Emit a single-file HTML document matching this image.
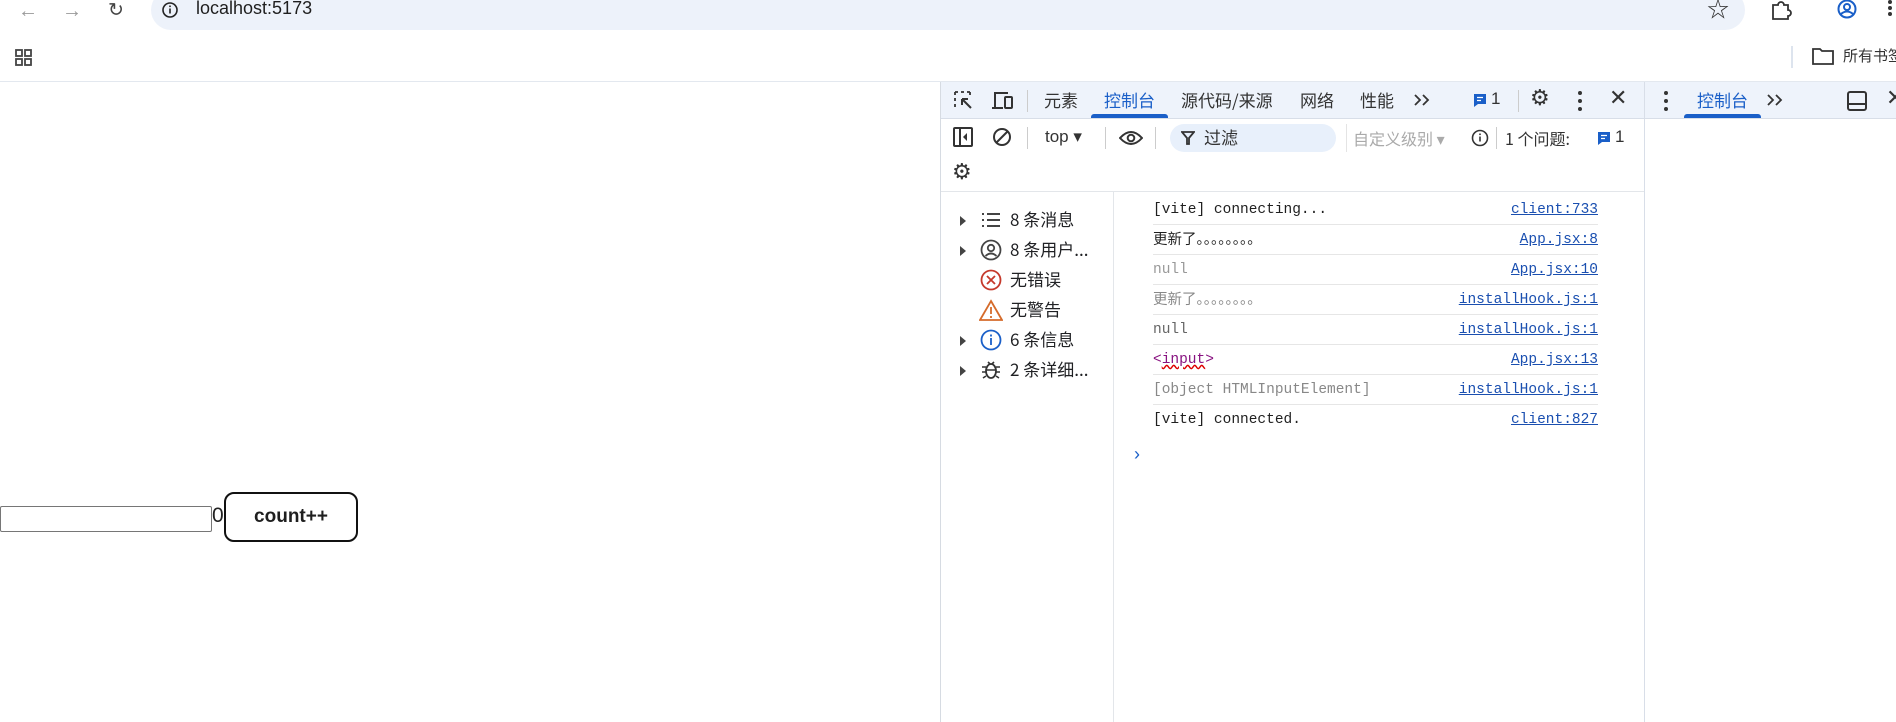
<!DOCTYPE html>
<html><head><meta charset="utf-8"><style>
*{margin:0;padding:0;box-sizing:border-box}
body{width:1896px;height:722px;position:relative;overflow:hidden;background:#fff;font-family:"Liberation Sans","Noto Sans CJK SC",sans-serif;color:#1f1f1f;line-height:1.15}
.a{position:absolute;white-space:nowrap}
.cj{font-family:"Noto Sans CJK SC","Liberation Sans",sans-serif;line-height:22px}
.mono{font-family:"Liberation Mono","Noto Sans CJK SC",monospace;font-size:14.5px;line-height:18px}
.row{position:absolute;left:1153px;width:445px;height:30px;border-bottom:1px solid #e6e6e6}
.lnk{position:absolute;right:0;top:6px;color:#1a4fb0;text-decoration:underline;line-height:18px}
.txt{position:absolute;left:0;top:6px;line-height:18px;height:18px;overflow:visible}
.sb{position:absolute;left:960px;font-size:17px;color:#202124}
.tri{position:absolute;left:0;top:6px;width:0;height:0;border-left:6px solid #444;border-top:5px solid transparent;border-bottom:5px solid transparent}
</style></head><body>
<div class="a" style="left:0;top:0;width:1896px;height:40px;background:#fff"></div>
<div class="a" style="left:151px;top:-10px;width:1594px;height:40px;background:#edf2fa;border-radius:20px"></div>
<div class="a" style="left:18px;top:0;color:#999;font-size:20px">←</div>
<div class="a" style="left:62px;top:0;color:#999;font-size:20px">→</div>
<div class="a" style="left:108px;top:0;color:#444;font-size:19px">↻</div>
<svg class="a" style="left:161px;top:1px" width="18" height="18"><circle cx="9" cy="9" r="7" fill="none" stroke="#222" stroke-width="1.6"/><rect x="8.2" y="7.5" width="1.6" height="5" fill="#222"/><rect x="8.2" y="4.5" width="1.6" height="1.6" fill="#222"/></svg>
<div class="a" style="left:196px;top:-2px;font-size:18px;color:#1f1f1f">localhost:5173</div>
<div class="a" style="left:1707px;top:-3px;font-size:22px;color:#333">☆</div>
<svg class="a" style="left:1770px;top:0" width="22" height="20"><path d="M3 5h5a3 3 0 0 1 6 0h4v5a3 3 0 0 1 0 6v3H3z" fill="none" stroke="#333" stroke-width="1.8"/></svg>
<svg class="a" style="left:1836px;top:0" width="22" height="22"><circle cx="11" cy="9" r="8.5" fill="none" stroke="#1a5fc8" stroke-width="2"/><circle cx="11" cy="7" r="3" fill="none" stroke="#1a5fc8" stroke-width="2"/><path d="M5 14q6-5 12 0" fill="none" stroke="#1a5fc8" stroke-width="2"/></svg>
<div class="a" style="left:1888px;top:0;width:4px;height:16px;border-left:4px dotted #333"></div>
<svg class="a" style="left:15px;top:49px" width="18" height="18"><g fill="none" stroke="#444" stroke-width="1.8"><rect x="1" y="1" width="6" height="6"/><rect x="10" y="1" width="6" height="6"/><rect x="1" y="10" width="6" height="6"/><rect x="10" y="10" width="6" height="6"/></g></svg>
<div class="a" style="left:1791px;top:46px;width:2px;height:22px;background:#dde4ee"></div>
<svg class="a" style="left:1812px;top:47px" width="22" height="18"><path d="M1 2h7l2 2h11v13H1z" fill="none" stroke="#333" stroke-width="1.8"/></svg>
<div class="a cj" style="left:1843px;top:45px;font-size:15px;color:#333">所有书签</div>
<div class="a" style="left:0;top:81px;width:1896px;height:1px;background:#e3e8ef"></div>
<div class="a" style="left:0;top:506px;width:212px;height:26px;border:1px solid #767676;border-radius:2px"></div>
<div class="a" style="left:212px;top:504px;font-size:21px;color:#222">0</div>
<div class="a" style="left:224px;top:492px;width:134px;height:50px;border:2px solid #111;border-radius:10px;background:#fff;font-size:19px;text-align:center;line-height:46px;font-weight:bold">count++</div>
<div class="a" style="left:940px;top:82px;width:1px;height:640px;background:#d6dbe2"></div>
<div class="a" style="left:941px;top:82px;width:955px;height:37px;background:#eef3fb;border-bottom:1px solid #d8dee8"></div>
<div class="a" style="left:1644px;top:82px;width:1px;height:640px;background:#d8dee8"></div>
<svg class="a" style="left:953px;top:90px" width="22" height="22"><path d="M2 2h3M8 2h3M14 2h3M2 2v3M2 8v3M2 14v3M17 2v3" stroke="#333" stroke-width="1.8" fill="none"/><path d="M9 9l9 9M9 9h6M9 9v6" stroke="#333" stroke-width="2" fill="none"/></svg>
<svg class="a" style="left:991px;top:90px" width="24" height="22"><path d="M4 18V3h13M1 18h11" stroke="#333" stroke-width="2" fill="none"/><rect x="14" y="7" width="7" height="11" rx="1" fill="none" stroke="#333" stroke-width="2"/></svg>
<div class="a" style="left:1027px;top:90px;width:1px;height:22px;background:#ccc"></div>
<div class="a cj" style="left:1044px;top:89px;font-size:17px;color:#333">元素</div>
<div class="a cj" style="left:1104px;top:89px;font-size:17px;color:#1a5fc8">控制台</div>
<div class="a" style="left:1091px;top:114px;width:77px;height:4px;background:#1a5fc8;border-radius:3px 3px 0 0"></div>
<div class="a cj" style="left:1181px;top:89px;font-size:17px;color:#333">源代码/来源</div>
<div class="a cj" style="left:1300px;top:89px;font-size:17px;color:#333">网络</div>
<div class="a cj" style="left:1360px;top:89px;font-size:17px;color:#333">性能</div>
<svg class="a" style="left:1413px;top:93px" width="18" height="14"><path d="M2 2l5 5-5 5M10 2l5 5-5 5" fill="none" stroke="#333" stroke-width="1.8"/></svg>
<svg class="a" style="left:1473px;top:93px" width="14" height="15"><path d="M1 1h12v10H5l-4 3z" fill="#1a5fc8"/><path d="M4 4.5h6M4 7.5h4" stroke="#fff" stroke-width="1.3"/></svg>
<div class="a" style="left:1491px;top:89px;font-size:17px;color:#333">1</div>
<div class="a" style="left:1518px;top:90px;width:1px;height:22px;background:#ccc"></div>
<div class="a" style="left:1530px;top:85px;font-size:22px;color:#333">⚙</div>
<div class="a" style="left:1578px;top:91px;width:4px;height:20px;border-left:4px dotted #333"></div>
<div class="a" style="left:1609px;top:85px;font-size:22px;color:#333">✕</div>
<div class="a" style="left:1664px;top:91px;width:4px;height:20px;border-left:4px dotted #333"></div>
<div class="a cj" style="left:1697px;top:89px;font-size:17px;color:#1a5fc8">控制台</div>
<div class="a" style="left:1684px;top:114px;width:77px;height:4px;background:#1a5fc8;border-radius:3px 3px 0 0"></div>
<svg class="a" style="left:1766px;top:93px" width="18" height="14"><path d="M2 2l5 5-5 5M10 2l5 5-5 5" fill="none" stroke="#333" stroke-width="1.8"/></svg>
<svg class="a" style="left:1847px;top:91px" width="20" height="20"><rect x="1" y="1" width="18" height="18" rx="2" fill="none" stroke="#333" stroke-width="2"/><path d="M1 13h18" stroke="#333" stroke-width="2"/></svg>
<div class="a" style="left:1886px;top:85px;font-size:22px;color:#333">✕</div>
<svg class="a" style="left:953px;top:127px" width="20" height="20"><rect x="1" y="1" width="18" height="18" rx="1" fill="none" stroke="#333" stroke-width="2"/><path d="M7 1v18" stroke="#333" stroke-width="2"/><path d="M14 6l-4 4 4 4z" fill="#333"/></svg>
<svg class="a" style="left:992px;top:127px" width="20" height="20"><circle cx="10" cy="10" r="8" fill="none" stroke="#333" stroke-width="2"/><path d="M4 16L16 4" stroke="#333" stroke-width="2"/></svg>
<div class="a" style="left:1027px;top:127px;width:1px;height:22px;background:#ccc"></div>
<div class="a" style="left:1045px;top:127px;font-size:17px;color:#333">top ▾</div>
<div class="a" style="left:1105px;top:127px;width:1px;height:22px;background:#ccc"></div>
<svg class="a" style="left:1119px;top:130px" width="24" height="16"><path d="M1 8q11-12 22 0q-11 12-22 0z" fill="none" stroke="#333" stroke-width="2"/><circle cx="12" cy="8" r="3.3" fill="none" stroke="#333" stroke-width="2"/></svg>
<div class="a" style="left:1155px;top:127px;width:1px;height:22px;background:#ccc"></div>
<div class="a" style="left:1170px;top:124px;width:166px;height:28px;background:#e8f0fb;border-radius:14px"></div>
<svg class="a" style="left:1181px;top:131px" width="14" height="14"><path d="M1 1h12L8 7v6H6V7z" fill="none" stroke="#333" stroke-width="1.8"/></svg>
<div class="a cj" style="left:1204px;top:126px;font-size:17px;color:#333">过滤</div>
<div class="a" style="left:1346px;top:124px;width:1px;height:28px;background:#e4e4e4"></div>
<div class="a cj" style="left:1353px;top:127px;font-size:16px;color:#aaa">自定义级别 ▾</div>
<svg class="a" style="left:1471px;top:129px" width="18" height="18"><circle cx="9" cy="9" r="7.5" fill="none" stroke="#333" stroke-width="1.6"/><rect x="8.2" y="7.5" width="1.6" height="5" fill="#333"/><rect x="8.2" y="4.5" width="1.6" height="1.6" fill="#333"/></svg>
<div class="a" style="left:1496px;top:127px;width:1px;height:22px;background:#ccc"></div>
<div class="a cj" style="left:1505px;top:127px;font-size:16px;color:#333">1 个问题:</div>
<svg class="a" style="left:1597px;top:131px" width="14" height="15"><path d="M1 1h12v10H5l-4 3z" fill="#1a5fc8"/><path d="M4 4.5h6M4 7.5h4" stroke="#fff" stroke-width="1.3"/></svg>
<div class="a" style="left:1615px;top:127px;font-size:17px;color:#333">1</div>
<div class="a" style="left:952px;top:159px;font-size:22px;color:#333">⚙</div>
<div class="a" style="left:941px;top:191px;width:703px;height:1px;background:#e3e6ea"></div>
<div class="a" style="left:1113px;top:191px;width:1px;height:531px;background:#e3e6ea"></div>
<div class="sb" style="top:208px;width:140px;height:26px"><span class="tri" style="top:8px"></span>
<svg class="a" style="left:21px;top:3px" width="20" height="18"><path d="M1 3h2M1 9h2M1 15h2M6 3h13M6 9h13M6 15h13" stroke="#444" stroke-width="2"/></svg><span class="a cj" style="left:50px;top:0">8 条消息</span></div>
<div class="sb" style="top:238px;height:26px"><span class="tri" style="top:8px"></span>
<svg class="a" style="left:20px;top:1px" width="22" height="22"><circle cx="11" cy="11" r="9.5" fill="none" stroke="#444" stroke-width="1.8"/><circle cx="11" cy="9" r="3.2" fill="none" stroke="#444" stroke-width="1.8"/><path d="M5.5 17q5.5-5 11 0" fill="none" stroke="#444" stroke-width="1.8"/></svg><span class="a cj" style="left:50px;top:0">8 条用户...</span></div>
<div class="sb" style="top:268px;height:26px">
<svg class="a" style="left:20px;top:1px" width="22" height="22"><circle cx="11" cy="11" r="9.5" fill="none" stroke="#c5392b" stroke-width="1.8"/><path d="M7 7l8 8M15 7l-8 8" stroke="#c5392b" stroke-width="1.8"/></svg><span class="a cj" style="left:50px;top:0">无错误</span></div>
<div class="sb" style="top:298px;height:26px">
<svg class="a" style="left:19px;top:1px" width="24" height="22"><path d="M12 2L23 21H1z" fill="none" stroke="#d56b2b" stroke-width="1.8"/><path d="M12 8v7M12 17v2" stroke="#d56b2b" stroke-width="1.8"/></svg><span class="a cj" style="left:50px;top:0">无警告</span></div>
<div class="sb" style="top:328px;height:26px"><span class="tri" style="top:8px"></span>
<svg class="a" style="left:20px;top:1px" width="22" height="22"><circle cx="11" cy="11" r="9.5" fill="none" stroke="#1a5fc8" stroke-width="1.8"/><path d="M11 9v7M11 5.5v2" stroke="#1a5fc8" stroke-width="1.8"/></svg><span class="a cj" style="left:50px;top:0">6 条信息</span></div>
<div class="sb" style="top:358px;height:26px"><span class="tri" style="top:8px"></span>
<svg class="a" style="left:21px;top:1px" width="20" height="22"><ellipse cx="10" cy="12" rx="5" ry="7" fill="none" stroke="#333" stroke-width="1.8"/><path d="M1 8h4M15 8h4M1 13h4M15 13h4M2 19l3-2M18 19l-3-2M7 3l2 2M13 3l-2 2M5 11h10" stroke="#333" stroke-width="1.6"/></svg><span class="a cj" style="left:50px;top:0">2 条详细...</span></div>
<div class="row mono" style="top:195px"><span class="txt">[vite] connecting...</span><span class="lnk">client:733</span></div>
<div class="row mono" style="top:225px"><span class="txt" style="font-family:'Noto Sans CJK SC',sans-serif;top:5px">更新了。。。。。。。。</span><span class="lnk">App.jsx:8</span></div>
<div class="row mono" style="top:255px"><span class="txt" style="color:#999">null</span><span class="lnk">App.jsx:10</span></div>
<div class="row mono" style="top:285px"><span class="txt" style="color:#888;font-family:'Noto Sans CJK SC',sans-serif;top:5px">更新了。。。。。。。。</span><span class="lnk">installHook.js:1</span></div>
<div class="row mono" style="top:315px"><span class="txt" style="color:#666">null</span><span class="lnk">installHook.js:1</span></div>
<div class="row mono" style="top:345px"><span class="txt" style="color:#881280">&lt;<span style="text-decoration:underline wavy #d00">input</span>&gt;</span><span class="lnk">App.jsx:13</span></div>
<div class="row mono" style="top:375px"><span class="txt" style="color:#888">[object HTMLInputElement]</span><span class="lnk">installHook.js:1</span></div>
<div class="row mono" style="top:405px;border-bottom:none"><span class="txt">[vite] connected.</span><span class="lnk">client:827</span></div>
<div class="a" style="left:1134px;top:444px;font-size:18px;color:#1a5fc8">›</div>
</body></html>
